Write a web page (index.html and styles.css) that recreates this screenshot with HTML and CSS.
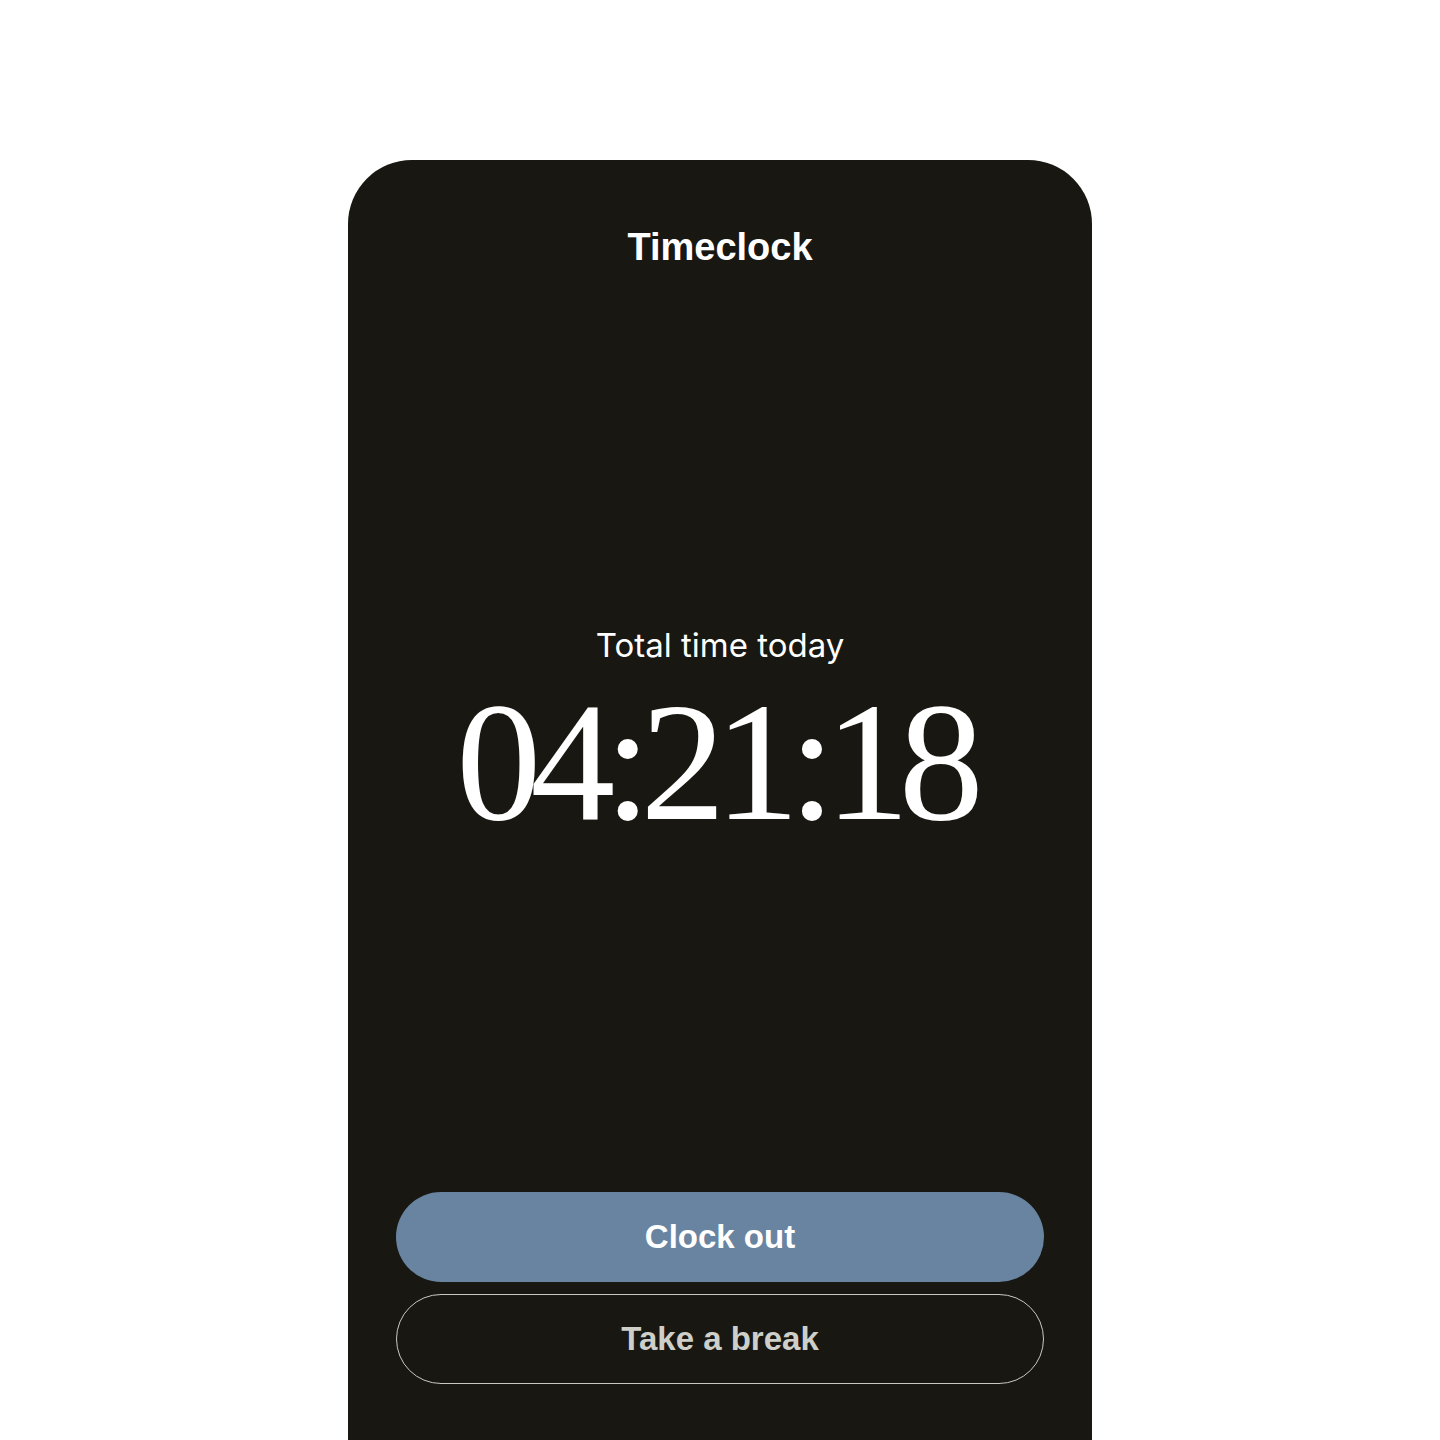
FILE: index.html
```html
<!DOCTYPE html>
<html lang="en">
<head>
  <meta charset="UTF-8">
  <meta name="viewport" content="width=device-width, initial-scale=1.0">
  <title>Timeclock</title>
  <link rel="stylesheet" href="styles.css">
</head>
<body>
  <div class="page">

    <div class="timeclock">
      <h1 class="title">Timeclock</h1>

      <div class="counter">
        <p class="counter-label">Total time today</p>
        <p class="counter-value">04:21:18</p>
      </div>

      <div class="actions">
        <button class="btn btn-primary" type="button">Clock out</button>
        <button class="btn btn-outline" type="button">Take a break</button>
      </div>
    </div>

  </div>
</body>
</html>
```

FILE: styles.css
```css
body {
  margin: 0;
  background: #ffffff;
  font-family: "Liberation Sans", Arial, sans-serif;
}

.page {
  display: flex;
  justify-content: center;
  padding-top: 160px;
  height: 1280px;
  overflow: hidden;
}

.timeclock {
  display: flex;
  flex-direction: column;
  width: 744px;
  height: 1280px;
  box-sizing: border-box;
  padding: 64px 48px 56px;
  background: #181712;
  border-radius: 64px 64px 0 0;
  color: #ffffff;
}

.title {
  margin: 0;
  text-align: center;
  font-size: 38px;
  line-height: 46px;
  font-weight: 700;
}

.counter {
  flex: 1;
  display: flex;
  flex-direction: column;
  align-items: center;
  justify-content: center;
}

.counter-label {
  margin: 0 0 4px;
  font-family: Inter, "Liberation Sans", sans-serif;
  font-size: 33px;
  line-height: 40px;
}

/* negative tracking leaves the last glyph hanging out, so widen the box on the right */
.counter-value {
  margin: 18px 11px 0 0;
  font-family: "Liberation Serif", "Times New Roman", serif;
  font-size: 170px;
  line-height: 150px;
  letter-spacing: -11px;
}

.actions {
  display: flex;
  flex-direction: column;
  gap: 12px;
}

.btn {
  height: 90px;
  border-radius: 45px;
  font-family: "Liberation Sans", Arial, sans-serif;
  font-size: 33px;
  font-weight: 700;
  cursor: pointer;
}

.btn-primary {
  border: none;
  background: #6984a0;
  color: #ffffff;
}

.btn-outline {
  border: 1.5px solid #c9c8c2;
  background: transparent;
  color: #cfcfca;
}
```
